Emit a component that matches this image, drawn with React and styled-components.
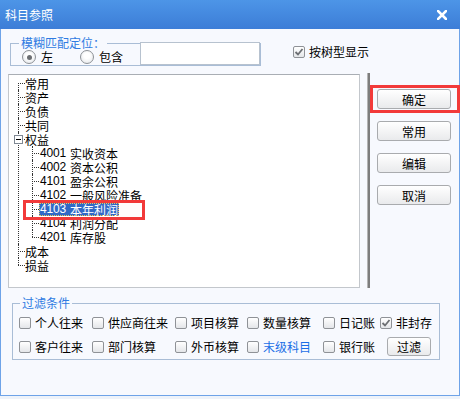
import React from "react";
import styled, { createGlobalStyle } from "styled-components";

const GlobalStyle = createGlobalStyle`
  html, body {
    margin: 0;
    padding: 0;
    background: #eef3fa;
  }
  body {
    font-family: "Noto Sans CJK SC", "Liberation Sans", sans-serif;
    font-size: 12px;
    color: #000;
  }
  * { box-sizing: border-box; }
`;

const Window = styled.div`
  position: relative;
  width: 460px;
  height: 396px;
  display: flex;
  flex-direction: column;
  background: #f7f9fe;
`;

const TitleBar = styled.div`
  height: 29px;
  flex: none;
  display: flex;
  align-items: center;
  justify-content: space-between;
  padding: 0 13px 0 5px;
  background: linear-gradient(#4d95e7, #3c7dd7);
  color: #fff;
  font-size: 12px;
  line-height: 14px;
`;

const Body = styled.div`
  flex: 1;
  display: flex;
  flex-direction: column;
  border: 1px solid #6ea3e8;
  border-top: none;
`;

const TopRow = styled.div`
  display: flex;
  align-items: flex-start;
  padding-left: 9px;
  margin-top: 7px;
`;

const Group = styled.fieldset`
  margin: 0;
  width: ${p => p.$w}px;
  min-width: 0;
  padding: 0 0 ${p => p.$pb || 0}px ${p => p.$pl}px;
  border: 1px solid #a9bdd6;
`;

const Legend = styled.legend`
  padding: 0 2px;
  margin-left: ${p => p.$ml || 0}px;
  color: #2f7be2;
  font-size: 12px;
  line-height: 14px;
`;

const FuzzyRow = styled.div`
  display: flex;
  align-items: flex-start;
  height: 15px;
`;

const RadioItem = styled.label`
  display: flex;
  align-items: center;
  gap: 5px;
  height: 14px;
  line-height: 14px;
  margin-left: ${p => p.$ml}px;
`;

const RadioDot = styled.span`
  width: 14px;
  height: 14px;
  border-radius: 50%;
  border: 1px solid #8d9196;
  background: radial-gradient(circle at 50% 40%, #ffffff 30%, #dfe2e6 100%);
  display: flex;
  align-items: center;
  justify-content: center;
  &::after {
    content: "";
    width: 5px;
    height: 5px;
    border-radius: 50%;
    background: ${p => (p.$on ? "#6b6e72" : "transparent")};
  }
`;

const SearchInput = styled.div`
  margin-left: auto;
  margin-top: -8px;
  width: 120px;
  height: 23px;
  background: #fff;
  border: 1px solid #b7c2cf;
`;

const CheckItem = styled.label`
  display: flex;
  align-items: center;
  gap: 4px;
  height: 14px;
  line-height: 14px;
  white-space: nowrap;
  color: ${p => p.$color || "#000"};
  margin: ${p => p.$m || 0};
`;

const Box = styled.span`
  flex: none;
  width: 12px;
  height: 12px;
  border: 1px solid #8f9297;
  border-radius: 2px;
  background: linear-gradient(#ffffff, #e4e6e9);
  display: flex;
  align-items: center;
  justify-content: center;
`;

const Main = styled.div`
  display: flex;
  align-items: flex-start;
  padding-left: 7px;
  margin-top: 8px;
`;

const TreeBox = styled.div`
  width: 352px;
  height: 214px;
  background: #fff;
  border: 1px solid #c3c7cc;
  border-top-color: #a9aeb4;
  padding: 1px 0 0 9px;
  overflow: hidden;
`;

const TreeList = styled.ul`
  list-style: none;
  margin: 0;
  padding: 0 0 0 ${p => p.$pl || 0}px;
`;

const Node = styled.li`
  position: relative;
  padding-left: 8px;
  line-height: 14px;
  &::before {
    content: "";
    position: absolute;
    left: 0;
    top: 7px;
    width: 7px;
    border-top: 1px dotted #333;
  }
  &::after {
    content: "";
    position: absolute;
    left: 0;
    top: ${p => (p.$first ? 7 : 0)}px;
    ${p => (p.$last ? "height: " + (p.$first ? 0 : 7) + "px;" : "bottom: 0;")}
    border-left: 1px dotted #333;
  }
`;

const Row = styled.div`
  display: flex;
  height: 14px;
  align-items: center;
`;

const Expander = styled.span`
  position: absolute;
  z-index: 1;
  left: -4px;
  top: 3px;
  width: 9px;
  height: 9px;
  border: 1px solid #7f8893;
  background: #fff;
  &::after {
    content: "";
    position: absolute;
    left: 1px;
    top: 3px;
    width: 5px;
    height: 1px;
    background: #000;
  }
`;

const Label = styled.span`
  display: flex;
  align-items: center;
  height: 13px;
  line-height: 13px;
  padding: 0 1px 0 0;
  margin-left: -1px;
  background: ${p => (p.$sel ? "#3169c6" : "transparent")};
  color: ${p => (p.$sel ? "#fff" : "#000")};
  outline: ${p => (p.$sel ? "1px dotted #e8c860" : "none")};
  outline-offset: -1px;
`;

const Code = styled.span`
  flex: none;
  width: 31px;
  padding-left: 1px;
  font-family: "Liberation Sans", sans-serif;
  letter-spacing: -0.2px;
`;

const Separator = styled.div`
  width: 3px;
  height: 215px;
  margin: -1px 0 0 7px;
  border-left: 1px solid #b4b4b4;
  border-right: 2px solid #7d7d7d;
`;

const ButtonCol = styled.div`
  display: flex;
  flex-direction: column;
  gap: 12px;
  padding-top: 15px;
  margin-left: 7px;
`;

const Button = styled.button`
  width: ${p => p.$w || 74}px;
  height: ${p => p.$h || 20}px;
  padding: 0;
  font-family: inherit;
  font-size: 12px;
  color: #000;
  border: 1px solid #a9abae;
  border-radius: 3px;
  background: linear-gradient(#ffffff, #e9eaec);
  margin: ${p => p.$m || 0};
`;

const FilterWrap = styled.div`
  margin: 8px 0 0 11px;
`;

const FilterGrid = styled.div`
  display: grid;
  grid-template-columns: 73px 83px 72px 76px 57px auto;
  grid-auto-rows: 14px;
  row-gap: 10px;
  padding: 6px 0 5px 0;
`;

const Mark = styled.div`
  position: absolute;
  left: ${p => p.$x}px;
  top: ${p => p.$y}px;
  width: ${p => p.$w}px;
  height: ${p => p.$h}px;
  border: 3px solid #f23a3a;
  pointer-events: none;
`;

const Check = () => (
  <svg width="10" height="10" viewBox="0 0 10 10">
    <path d="M1.5 5 L4 7.5 L8.5 2" fill="none" stroke="#6c6f73" strokeWidth="1.8" />
  </svg>
);

const CloseIcon = () => (
  <svg width="10" height="10" viewBox="0 0 10 10">
    <path d="M1 1 L9 9 M9 1 L1 9" stroke="#fff" strokeWidth="2.6" strokeLinecap="square" />
  </svg>
);

const CheckBox = ({ on, children, color, m }) => (
  <CheckItem $color={color} $m={m}>
    <Box>{on && <Check />}</Box>
    {children}
  </CheckItem>
);

const equity = [
  ["4001", "实收资本"],
  ["4002", "资本公积"],
  ["4101", "盈余公积"],
  ["4102", "一般风险准备"],
  ["4103", "本年利润"],
  ["4104", "利润分配"],
  ["4201", "库存股"],
];

const filters = [
  ["个人往来"], ["供应商往来"], ["项目核算"], ["数量核算"], ["日记账"], ["非封存", true],
  ["客户往来"], ["部门核算"], ["外币核算"], ["末级科目", false, "#1c6fe6"], ["银行账"],
];

export default function App() {
  return (
    <>
      <GlobalStyle />
      <Window>
        <TitleBar>
          <span>科目参照</span>
          <CloseIcon />
        </TitleBar>
        <Body>
          <TopRow>
            <Group $w={251} $pl={8}>
              <Legend>模糊匹配定位：</Legend>
              <FuzzyRow>
                <RadioItem $ml={3}><RadioDot $on />左</RadioItem>
                <RadioItem $ml={27}><RadioDot />包含</RadioItem>
                <SearchInput />
              </FuzzyRow>
            </Group>
            <CheckBox on m="9px 0 0 32px">按树型显示</CheckBox>
          </TopRow>

          <Main>
            <TreeBox>
              <TreeList>
                <Node $first><Row><Label>常用</Label></Row></Node>
                <Node><Row><Label>资产</Label></Row></Node>
                <Node><Row><Label>负债</Label></Row></Node>
                <Node><Row><Label>共同</Label></Row></Node>
                <Node>
                  <Expander />
                  <Row><Label>权益</Label></Row>
                  <TreeList $pl={6}>
                    {equity.map(([code, name], i) => (
                      <Node key={code} $last={i === equity.length - 1}>
                        <Row>
                          <Label $sel={code === "4103"}>
                            <Code>{code}</Code>
                            {name}
                          </Label>
                        </Row>
                      </Node>
                    ))}
                  </TreeList>
                </Node>
                <Node><Row><Label>成本</Label></Row></Node>
                <Node $last><Row><Label>损益</Label></Row></Node>
              </TreeList>
            </TreeBox>
            <Separator />
            <ButtonCol>
              <Button>确定</Button>
              <Button>常用</Button>
              <Button>编辑</Button>
              <Button>取消</Button>
            </ButtonCol>
          </Main>

          <FilterWrap>
            <Group $w={428} $pl={6}>
              <Legend $ml={1}>过滤条件</Legend>
              <FilterGrid>
                {filters.map(([text, on, color]) => (
                  <CheckBox key={text} on={on} color={color}>{text}</CheckBox>
                ))}
                <Button $w={44} $h={19} $m="-3px 0 0 7px">过滤</Button>
              </FilterGrid>
            </Group>
          </FilterWrap>
        </Body>
        <Mark $x={23} $y={200} $w={122} $h={20} />
        <Mark $x={370} $y={85} $w={90} $h={28} />
      </Window>
    </>
  );
}
